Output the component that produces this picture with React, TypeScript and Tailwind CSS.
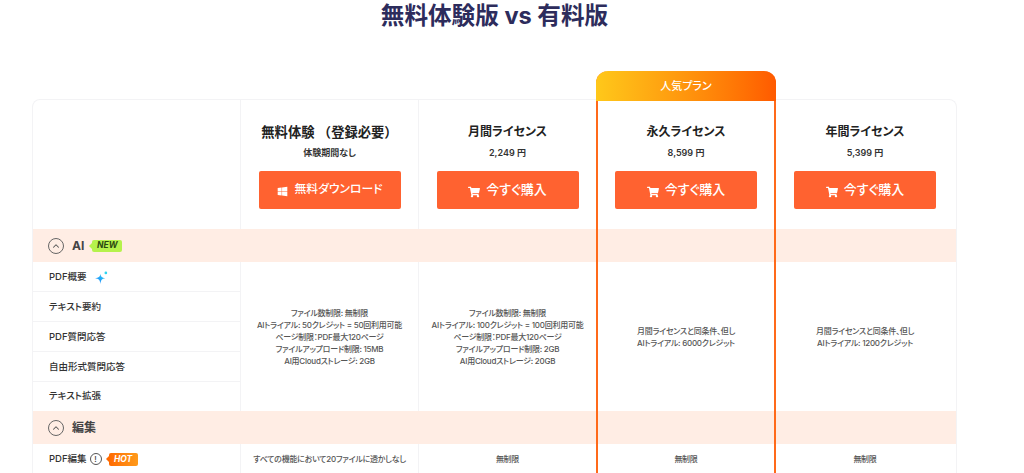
import { ChevronUp } from "lucide-react";
import { FaShoppingCart, FaWindows } from "react-icons/fa";

const plans = [
  { name: "無料体験 （登録必要）", price: "体験期間なし", button: "無料ダウンロード", win: true },
  { name: "月間ライセンス", price: "2,249 円", button: "今すぐ購入", win: false },
  { name: "永久ライセンス", price: "8,599 円", button: "今すぐ購入", win: false },
  { name: "年間ライセンス", price: "5,399 円", button: "今すぐ購入", win: false },
];

const aiCells = [
  [
    "ファイル数制限: 無制限",
    "AIトライアル: 50クレジット = 50回利用可能",
    "ページ制限：PDF最大120ページ",
    "ファイルアップロード制限: 15MB",
    "AI用Cloudストレージ: 2GB",
  ],
  [
    "ファイル数制限: 無制限",
    "AIトライアル: 100クレジット = 100回利用可能",
    "ページ制限：PDF最大120ページ",
    "ファイルアップロード制限: 2GB",
    "AI用Cloudストレージ: 20GB",
  ],
  ["月間ライセンスと同条件、但し", "AIトライアル: 6000クレジット"],
  ["月間ライセンスと同条件、但し", "AIトライアル: 1200クレジット"],
];

const editCells = ["すべての機能において20ファイルに透かしなし", "無制限", "無制限", "無制限"];

function SectionRow({ title, children }: { title: string; children?: React.ReactNode }) {
  return (
    <div className="col-span-5 flex items-center bg-[#ffede4] pl-[15px]">
      <span className="flex h-[16px] w-[16px] items-center justify-center rounded-full border border-[#666]">
        <ChevronUp className="h-[10px] w-[10px] text-[#555]" strokeWidth={2.5} />
      </span>
      <span className="ml-[8px] text-[12px] font-bold text-[#444]">{title}</span>
      {children}
    </div>
  );
}

function Sparkle() {
  return (
    <svg viewBox="0 0 24 24" className="ml-[8px] h-[13px] w-[13px]">
      <defs>
        <linearGradient id="spark" x1="0" y1="1" x2="1" y2="0">
          <stop offset="0" stopColor="#1677ff" />
          <stop offset="1" stopColor="#2fd6f0" />
        </linearGradient>
      </defs>
      <path d="M10 5 C10.8 10.5 12.5 12.2 19 13.5 C12.5 14.8 10.8 16.5 10 24 C9.2 16.5 7.5 14.8 0 13.5 C7.5 12.2 9.2 10.5 10 5Z" fill="url(#spark)" />
      <circle cx="20" cy="3.5" r="2.5" fill="#2fd6f0" />
    </svg>
  );
}

export default function App() {
  return (
    <main className="h-[473px] overflow-hidden bg-white font-['Inter','Noto_Sans_CJK_JP',sans-serif] [font-feature-settings:'palt']">
      <h1 className="h-[99px] w-[989px] pt-[1px] text-center text-[23.6px] leading-[29px] font-bold text-[#2d2c5c]">
        無料体験版 vs 有料版
      </h1>
      <div className="relative ml-[32px] w-[925px]">
        <div className="grid grid-cols-[207px_178px_178px_179px_182px] grid-rows-[129px_33px_30px_30px_30px_30px_29px_33px_30px] overflow-hidden rounded-t-[8px] border-x border-t border-[#f3f3f5]">
          <div />
          {plans.map((plan, i) => (
            <div key={plan.name} className={`flex flex-col items-center border-l border-[#f3f3f5] pt-[22px] ${i === 3 ? "pr-[3px]" : ""}`}>
              <div className={`leading-[20px] font-semibold text-[#222] ${plan.win ? "text-[13.3px] [font-feature-settings:normal]" : "text-[12px]"}`}>{plan.name}</div>
              <div className="mt-[4px] text-[9px] leading-[14px] font-semibold text-[#333]">{plan.price}</div>
              <button className={`mt-[11px] flex h-[38px] w-[142px] items-center justify-center rounded-[2px] bg-[#ff6230] font-medium text-white ${plan.win ? "gap-[7px] text-[11.8px]" : "gap-[6px] text-[13px]"}`}>
                {plan.win ? <FaWindows className="mt-[3px] h-[11px] w-[11px]" /> : <FaShoppingCart className="mt-[3px] h-[12px] w-[12px]" />}
                {plan.button}
              </button>
            </div>
          ))}

          <SectionRow title="AI">
            <span className="relative ml-[8px] flex h-[12px] w-[30px] items-center justify-center rounded-[2px] bg-[#b5f24c] text-[8.5px] font-bold italic text-[#2c4a10]">
              <span className="absolute left-[-3px] top-[3px] h-0 w-0 border-y-[3px] border-r-[3px] border-y-transparent border-r-[#b5f24c]" />
              NEW
            </span>
          </SectionRow>

          <div className="flex items-center border-b border-[#f3f3f5] pt-[1px] pl-[16px] text-[9.5px] font-medium text-[#333]">
            PDF概要
            <Sparkle />
          </div>
          {aiCells.map((lines, i) => (
            <div key={i} className={`row-span-5 flex flex-col items-center justify-center border-l border-[#f3f3f5] text-center text-[8px] leading-[12px] font-medium tracking-[-0.25px] text-[#555] ${i === 3 ? "pr-[3px]" : ""}`}>
              {lines.map((line) => (
                <div key={line}>{line}</div>
              ))}
            </div>
          ))}
          <div className="flex items-center border-b border-[#f3f3f5] pt-[1px] pl-[16px] text-[9.5px] font-medium text-[#333]">テキスト要約</div>
          <div className="flex items-center border-b border-[#f3f3f5] pt-[1px] pl-[16px] text-[9.5px] font-medium text-[#333]">PDF質問応答</div>
          <div className="flex items-center border-b border-[#f3f3f5] pt-[1px] pl-[16px] text-[9.5px] font-medium text-[#333]">自由形式質問応答</div>
          <div className="flex items-center pl-[16px] text-[9.5px] font-medium text-[#333]">テキスト拡張</div>

          <SectionRow title="編集" />

          <div className="flex items-center pl-[16px] text-[9.5px] font-medium text-[#333]">
            PDF編集
            <span className="ml-[3px] flex h-[12px] w-[12px] items-center justify-center rounded-full border border-[#555] text-[8px] leading-none text-[#444]">!</span>
            <span className="relative ml-[7px] flex h-[13px] w-[29px] items-center justify-center rounded-[2px] bg-gradient-to-r from-[#ff6a00] to-[#ff9a1a] text-[8.5px] font-bold italic text-white">
              <span className="absolute left-[-3px] top-[3.5px] h-0 w-0 border-y-[3px] border-r-[3px] border-y-transparent border-r-[#ff6a00]" />
              HOT
            </span>
          </div>
          {editCells.map((cell, i) => (
            <div key={i} className={`flex items-center justify-center border-l border-[#f3f3f5] text-[8px] font-medium tracking-[-0.25px] text-[#555] ${i === 3 ? "pr-[3px]" : ""}`}>
              {cell}
            </div>
          ))}
        </div>

        <div className="absolute left-[564px] top-[-28px] h-[420px] w-[180px] rounded-t-[12px] border-x-[2px] border-[#ff6a1a]">
          <div className="mx-[-2px] flex h-[30px] items-center justify-center rounded-t-[12px] bg-gradient-to-r from-[#ffc81a] to-[#ff5a00] text-[11px] font-medium text-white">
            人気プラン
          </div>
        </div>
      </div>
    </main>
  );
}
